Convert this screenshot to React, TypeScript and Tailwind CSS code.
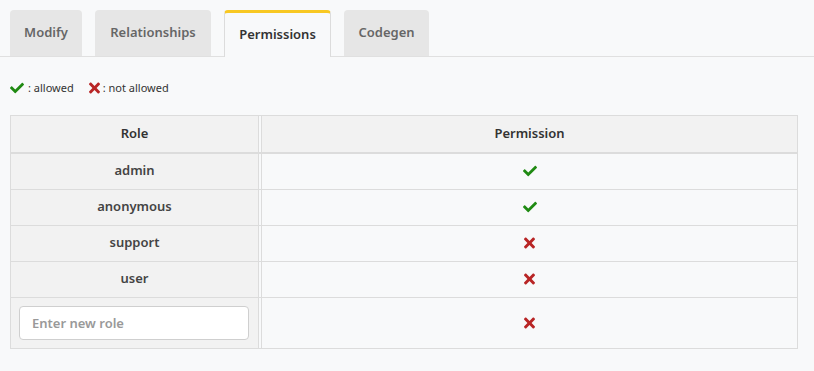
import { FaCheck, FaTimes } from 'react-icons/fa'

const tabs = [
    { label: 'Modify', width: 'w-[72px]' },
    { label: 'Relationships', width: 'w-[116px]' },
    { label: 'Permissions', width: 'w-[107px]' },
    { label: 'Codegen', width: 'w-[85px]' },
]

const roles = [
    { name: 'admin', allowed: true },
    { name: 'anonymous', allowed: true },
    { name: 'support', allowed: false },
    { name: 'user', allowed: false },
]

function Allowed() {
    return <FaCheck className="text-[#1f8a12] w-[14px] h-[14px]" />
}

function Denied() {
    return <FaTimes className="text-[#b82525] w-[11px] h-[16px]" />
}

export default function App() {
    return (
        <div className="min-h-screen bg-[#f8f9fa] pt-[10px] text-[#333]" style={{ fontFamily: '"Noto Sans", sans-serif' }}>
            {/* tabs */}
            <div className="flex gap-[13px] px-[10px] border-b border-[#e0e0e0] h-[47px]">
                {tabs.map((t) => {
                    const active = t.label === 'Permissions'
                    return active ? (
                        <div
                            key={t.label}
                            className={`${t.width} h-[47px] flex items-center justify-center rounded-t-[4px] bg-[#f8f9fa] border-x border-[#dcdcdc] border-t-[3px] border-t-[#f8c823] text-[13px] font-semibold text-[#333]`}
                        >
                            {t.label}
                        </div>
                    ) : (
                        <div
                            key={t.label}
                            className={`${t.width} h-[46px] flex items-center justify-center rounded-t-[4px] bg-[#e6e6e6] text-[13px] font-semibold text-[#666]`}
                        >
                            {t.label}
                        </div>
                    )
                })}
            </div>

            {/* legend */}
            <div className="flex items-center px-[10px] mt-[23px] text-[11px] text-[#333]">
                <Allowed />
                <span className="ml-[4px]">: allowed</span>
                <span className="ml-[15px] flex"><Denied /></span>
                <span className="ml-[3px]">: not allowed</span>
            </div>

            {/* table */}
            <div className="mx-[10px] mt-[18px] w-[788px] border border-[#dcdcdc] text-[13px]">
                <div className="flex h-[38px] border-b-2 border-[#dcdcdc] bg-[#f2f2f2] font-semibold">
                    <div className="w-[248px] border-r border-[#dcdcdc] flex items-center justify-center">Role</div>
                    <div className="w-[2px] bg-[#f8f9fa]" />
                    <div className="flex-1 border-l border-[#dcdcdc] flex items-center justify-center">Permission</div>
                </div>
                {roles.map((r) => (
                    <div key={r.name} className="flex h-[36px] border-b border-[#dcdcdc]">
                        <div className="w-[248px] border-r border-[#dcdcdc] bg-[#f2f2f2] flex items-center justify-center font-semibold text-[#444]">
                            {r.name}
                        </div>
                        <div className="w-[2px]" />
                        <div className="flex-1 border-l border-[#dcdcdc] flex items-center justify-center">
                            {r.allowed ? <Allowed /> : <Denied />}
                        </div>
                    </div>
                ))}
                <div className="flex h-[50px]">
                    <div className="w-[248px] border-r border-[#dcdcdc] bg-[#f2f2f2] flex items-center px-[8px]">
                        <input
                            placeholder="Enter new role"
                            className="w-[230px] h-[34px] rounded-[4px] border border-[#cfcfcf] bg-white px-[12px] text-[13px] font-semibold placeholder:text-[#999] outline-none"
                        />
                    </div>
                    <div className="w-[2px]" />
                    <div className="flex-1 border-l border-[#dcdcdc] flex items-center justify-center">
                        <Denied />
                    </div>
                </div>
            </div>
        </div>
    )
}
